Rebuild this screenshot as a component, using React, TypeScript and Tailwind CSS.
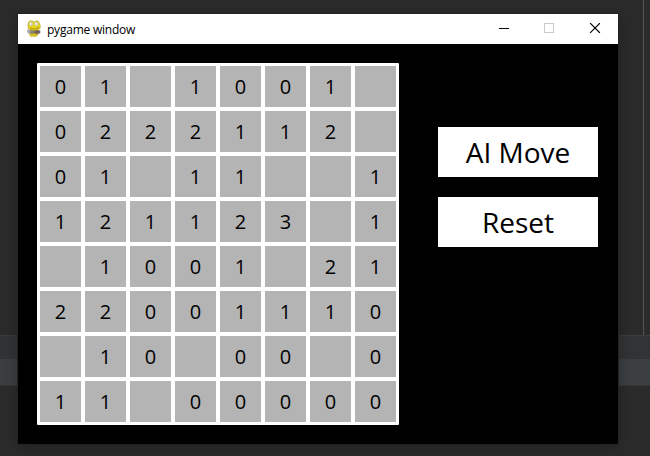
import React from "react";

const board = [
  "01 1001 ",
  "0222112 ",
  "01 11  1",
  "121123 1",
  " 1001 21",
  "22001110",
  " 10 00 0",
  "11 00000",
];

function SnakeIcon() {
  return (
    <svg width="16" height="18" viewBox="0 0 16 18" className="shrink-0">
      <path d="M4 9h8v6l-2 1.500H4.500L3 14z" fill="#b3a024" />
      <path d="M2 4.500Q2 1.500 4 .8L6.500 1l1.500 1L10.500.8q2.300 0 2.800 2.200l1.200 3.500-.5 2L11.500 10H5L2 8.500z" fill="#e6d31a" stroke="#a89b30" strokeWidth=".5" />
      <path d="M4 8.200q4 1.500 9.500-.5" fill="none" stroke="#9b850b" strokeWidth=".7" />
      <circle cx="5" cy="3.900" r="1.900" fill="#f4f4f4" stroke="#aaa46b" strokeWidth=".4" />
      <circle cx="10.300" cy="3.900" r="1.900" fill="#f4f4f4" stroke="#aaa46b" strokeWidth=".4" />
      <path d="M5 3.500h1v1H5zM10 3.500h1v1h-1z" fill="#aaa" />
      <path d="M1 10l2.500-.8 1.500 2-1 2.500L1.500 13z" fill="#a7a9aa" />
      <path d="M4.500 10.500l4 .3v2.700h-4z" fill="#85847c" />
      <path d="M8.500 11l3.500-1 2.300.7v2.300L12 14 8.500 13z" fill="#76605b" />
      <path d="M4 14h6.500v2.300H4z" fill="#d8c51d" />
    </svg>
  );
}

function TitleBar() {
  return (
    <header className="flex h-[30px] items-center bg-white pl-2 text-black">
      <SnakeIcon />
      <span className="ml-[5px] w-[120px] whitespace-nowrap text-[12px] leading-[28px] tracking-[-0.22px] pt-[2px]">pygame window</span>
      <svg width="106" height="30" viewBox="0 0 106 30" className="ml-auto mr-4" shapeRendering="crispEdges">
        <path d="M3 14h10v1H3z" fill="#000" />
        <path d="M48.500 9.500h9v9h-9z" fill="none" stroke="#ccc" />
        <path d="M94.500 9.500l9 9M103.500 9.500l-9 9" stroke="#000" strokeWidth="1.100" strokeLinecap="square" shapeRendering="auto" />
      </svg>
    </header>
  );
}

function Board() {
  return (
    <div className="grid h-[362px] w-[362px] shrink-0 grid-cols-[repeat(8,41px)] grid-rows-[repeat(8,41px)] gap-1 rounded-[1px] bg-white p-[3px]">
      {board.flatMap((row, r) =>
        row.split("").map((n, c) => (
          <div key={`${r}-${c}`} className="flex items-center justify-center bg-[#b4b4b4] text-[20px] leading-[41px]">
            {n.trim()}
          </div>
        ))
      )}
    </div>
  );
}

function GameButton({ children }: { children: React.ReactNode }) {
  return (
    <button className="flex h-[50px] w-[160px] items-center justify-center bg-white text-[28px] leading-[50px] text-black">
      <span className="whitespace-nowrap">{children}</span>
    </button>
  );
}

export default function App() {
  return (
    <div className="grid h-[456px] w-[650px] overflow-hidden bg-[#2b2b2b] font-['Open_Sans','Noto_Sans',sans-serif] text-black">
      <div className="col-start-1 row-start-1 flex flex-col">
        <div className="mr-[6px] h-[335px] border-r border-[#555]" />
        <div className="h-6 border-t border-[#3c3c3c] bg-[#313335]" />
        <div className="h-[27px] border-b border-[#373737] bg-[#3b3f42]" />
      </div>
      <main className="z-10 col-start-1 row-start-1 ml-[18px] mt-[14px] h-[430px] w-[600px] bg-black shadow-[0_2px_14px_rgba(0,0,0,0.3),0_0_0_1px_#292929]">
        <TitleBar />
        <div className="flex gap-[39px] pl-[19px] pt-[19px]">
          <Board />
          <div className="flex flex-col gap-5 pt-16">
            <GameButton>AI Move</GameButton>
            <GameButton>Reset</GameButton>
          </div>
        </div>
      </main>
    </div>
  );
}
